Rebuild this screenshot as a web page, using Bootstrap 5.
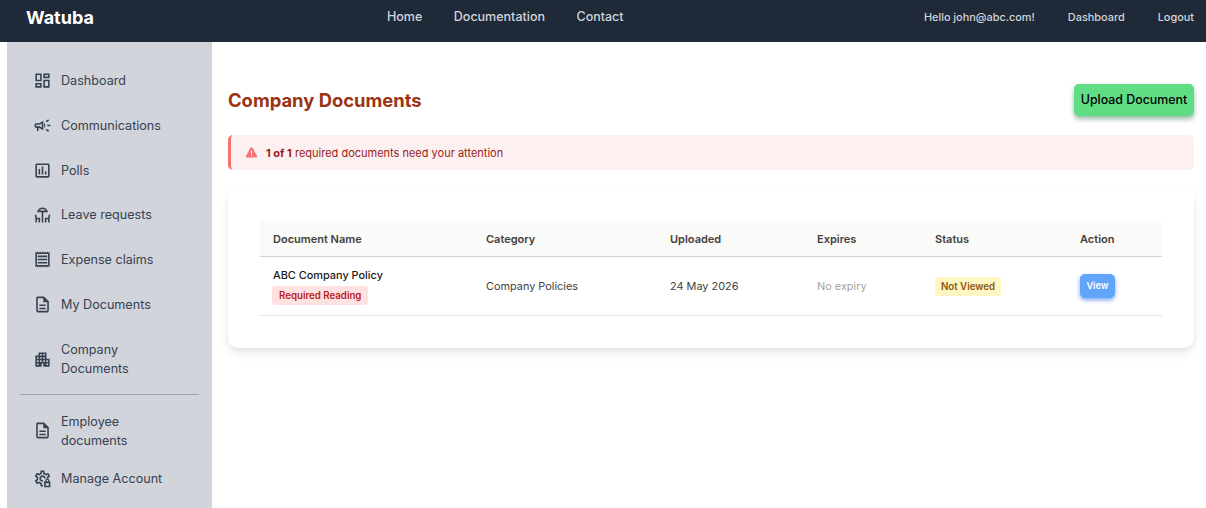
<!DOCTYPE html>
<html lang="en">
<head>
  <meta charset="UTF-8">
  <meta name="viewport" content="width=device-width, initial-scale=1.0">
  <title>Company Documents</title>
  <link href="https://cdn.jsdelivr.net/npm/bootstrap@5.3.0/dist/css/bootstrap.min.css" rel="stylesheet">
  <style>
    html, body { height: 100%; overflow: hidden; }
    body { font-family: Inter, "Liberation Sans", sans-serif; background: #fff; color: #374151; }
    .top-bar { height: 42px; background: #1f2937; padding: 0 12px 8px 26px; }
    .brand-name { width: 361px; font-size: 18px; font-weight: 700; color: #fff; text-decoration: none; }
    .top-mid { gap: 31.5px; }
    .top-mid a { font-size: 12.5px; font-weight: 500; color: #d1d5db; text-decoration: none; }
    .top-right { gap: 33px; }
    .top-right a, .top-right span { font-size: 10.9px; font-weight: 500; color: #d1d5db; text-decoration: none; }
    .page-wrap { height: 466px; padding-left: 7px; }
    .side-bar { width: 205px; background: #d1d5db; flex-shrink: 0; overflow: hidden; padding-top: 16.3px; }
    .side-link { display: flex; align-items: center; gap: 9px; padding: 12.85px 30px 12.85px 26px; font-size: 12.6px; line-height: 19px; color: #374151; text-decoration: none; }
    .side-link.two-line { padding-top: 13.85px; }
    .side-link.tight { padding-top: 9.5px; padding-bottom: 9.5px; }
    .side-link svg { width: 19px; height: 19px; flex-shrink: 0; fill: #374151; }
    .side-rule { margin: 3px 13px 7px; border-top: 1px solid #9ca3af; opacity: 1; }
    .main-pane { padding: 42px 12px 0 16px; }
    .page-title { font-size: 18.4px; font-weight: 700; color: #9a3412; margin: 0; padding-top: 1px; }
    .upload-btn { background: #60dc85; color: #000; font-size: 12.4px; font-weight: 500; border: 0; border-radius: 5px; height: 32px; width: 120px; padding: 0; box-shadow: 0 3px 5px rgba(22, 101, 52, .45); }
    .warn-box { height: 35px; margin-top: 19px; background: #fcf1f0; border-left: 3px solid #f87171; border-radius: 5px; padding: 1px 0 0 14px; gap: 8px; font-size: 11px; color: #991b1b; }
    .warn-box svg { width: 13px; height: 13px; margin-top: -2px; }
    .doc-panel { margin-top: 18px; height: 160px; background: #fff; border-radius: 10px; padding: 33px 32px 0; box-shadow: 0 6px 12px -2px rgba(0, 0, 0, .1), 0 2px 6px rgba(0, 0, 0, .04); }
    .doc-table { margin: 0; table-layout: fixed; width: 100%; font-size: 10.9px; }
    .doc-table th { background: #fafaf9; color: #44403c; font-size: 11px; font-weight: 600; height: 35px; padding: 1px 12px 0; vertical-align: middle; border-bottom: 1px solid #d6d3d1; }
    .doc-table td { height: 59px; padding: 1px 12px 0; vertical-align: middle; color: #44403c; border-bottom: 1px solid #e7e5e4; }
    .doc-table th:first-child, .doc-table td:first-child { padding-left: 13px; }
    .doc-name { color: #1c1917; font-weight: 450; line-height: 15px; }
    .req-tag { display: inline-block; background: #fee2e2; color: #b91c1c; font-size: 9.7px; font-weight: 600; line-height: 13px; padding: 3px 7px; border-radius: 3px; margin-top: 3px; margin-left: -1px; }
    .muted-cell { color: #a8a29e !important; }
    .status-tag { display: inline-block; background: #fef6c3; color: #8f5410; font-size: 9.7px; font-weight: 600; line-height: 13px; padding: 3px 6px; border-radius: 3px; }
    .view-btn { background: #60a5fa; color: #fff; font-size: 9.2px; font-weight: 600; border: 0; border-radius: 5px; height: 24px; width: 35px; padding: 0; box-shadow: 0 2px 4px rgba(37, 99, 235, .6); }
  </style>
</head>
<body>
  <nav class="top-bar d-flex align-items-center">
    <a href="#" class="brand-name">Watuba</a>
    <div class="top-mid d-flex align-items-center">
      <a href="#">Home</a>
      <a href="#">Documentation</a>
      <a href="#">Contact</a>
    </div>
    <div class="top-right d-flex align-items-center ms-auto">
      <span>Hello john@abc.com!</span>
      <a href="#">Dashboard</a>
      <a href="#">Logout</a>
    </div>
  </nav>

  <div class="page-wrap d-flex">
    <aside class="side-bar">
      <a href="#" class="side-link"><svg viewBox="0 0 24 24"><path d="M19 5v2h-4V5h4M9 5v6H5V5h4m10 8v6h-4v-6h4M9 17v2H5v-2h4M21 3h-8v6h8V3zM11 3H3v10h8V3zm10 8h-8v10h8V11zm-10 4H3v6h8v-6z"/></svg>Dashboard</a>
      <a href="#" class="side-link"><svg viewBox="0 0 24 24"><path d="M18 11v2h4v-2h-4zm-2 6.610c.96.710 2.210 1.650 3.200 2.390.4-.53.8-1.070 1.200-1.600-.99-.74-2.240-1.680-3.200-2.400-.4.54-.8 1.080-1.200 1.610zM20.400 5.600c-.4-.53-.8-1.070-1.200-1.600-.99.74-2.240 1.680-3.200 2.400.4.53.8 1.070 1.200 1.600.96-.72 2.210-1.650 3.200-2.400zM4 9c-1.100 0-2 .9-2 2v2c0 1.100.9 2 2 2h1v4h2v-4h1l5 3V6L8 9H4zm5.030 1.710L11 9.530v4.940l-1.970-1.180-.48-.29H4v-2h4.550l.48-.29zM15.500 12c0-1.330-.58-2.530-1.500-3.350v6.690c.92-.81 1.500-2.010 1.500-3.340z"/></svg>Communications</a>
      <a href="#" class="side-link"><svg viewBox="0 0 24 24"><path d="M19 3H5c-1.100 0-2 .9-2 2v14c0 1.100.9 2 2 2h14c1.100 0 2-.9 2-2V5c0-1.100-.9-2-2-2zm0 16H5V5h14v14zM7 10h2v7H7zm4-3h2v10h-2zm4 6h2v4h-2z"/></svg>Polls</a>
      <a href="#" class="side-link"><svg viewBox="0 0 24 24"><path fill-rule="evenodd" d="M19 9c-.8-3.500-3.500-6-7-6s-6.200 2.500-7 6h6v13h2V9zM12 5c2 0 3.600 1.300 4.300 2H7.700c.7-.7 2.300-2 4.300-2z"/><path d="M4.140 12l-1.960.37.820 4.370V22h2l.020-4H7v4h2v-6H4.900zM19.100 16H15v6h2v-4h1.980l.020 4h2v-5.260l.820-4.370-1.960-.37z"/></svg>Leave requests</a>
      <a href="#" class="side-link"><svg viewBox="0 0 24 24"><path d="M19.500 3.500L18 2l-1.500 1.500L15 2l-1.500 1.500L12 2l-1.500 1.500L9 2 7.500 3.500 6 2 4.500 3.500 3 2v20l1.500-1.500L6 22l1.500-1.500L9 22l1.500-1.500L12 22l1.500-1.500L15 22l1.500-1.500L18 22l1.500-1.500L21 22V2l-1.500 1.500zM19 19.090H5V4.910h14v14.180zM6 15h12v2H6zm0-4h12v2H6zm0-4h12v2H6z"/></svg>Expense claims</a>
      <a href="#" class="side-link"><svg viewBox="0 0 24 24"><path d="M8 16h8v2H8zm0-4h8v2H8zm6-10H6c-1.100 0-2 .9-2 2v16c0 1.100.89 2 1.990 2H18c1.100 0 2-.9 2-2V8l-6-6zm4 18H6V4h7v5h5v11z"/></svg>My Documents</a>
      <a href="#" class="side-link two-line"><svg viewBox="0 0 24 24"><path d="M17 11V3H7v4H3v14h8v-4h2v4h8V11h-4zM7 19H5v-2h2v2zm0-4H5v-2h2v2zm0-4H5V9h2v2zm4 4H9v-2h2v2zm0-4H9V9h2v2zm0-4H9V5h2v2zm4 8h-2v-2h2v2zm0-4h-2V9h2v2zm0-4h-2V5h2v2zm4 12h-2v-2h2v2zm0-4h-2v-2h2v2z"/></svg><span>Company Documents</span></a>
      <hr class="side-rule">
      <a href="#" class="side-link tight"><svg viewBox="0 0 24 24"><path d="M8 16h8v2H8zm0-4h8v2H8zm6-10H6c-1.100 0-2 .9-2 2v16c0 1.100.89 2 1.990 2H18c1.100 0 2-.9 2-2V8l-6-6zm4 18H6V4h7v5h5v11z"/></svg><span>Employee documents</span></a>
      <a href="#" class="side-link tight"><svg viewBox="0 0 24 24"><path d="M19.430 12.980c.04-.32.07-.64.07-.98 0-.34-.03-.66-.07-.98l2.110-1.650c.19-.15.24-.42.12-.64l-2-3.460c-.09-.16-.26-.25-.44-.25-.06 0-.12.01-.17.03l-2.490 1c-.52-.4-1.080-.73-1.690-.98l-.38-2.650C14.460 2.180 14.250 2 14 2h-4c-.25 0-.46.18-.49.42l-.38 2.650c-.61.25-1.170.59-1.690.98l-2.490-1c-.06-.02-.12-.03-.18-.03-.17 0-.34.09-.43.25l-2 3.460c-.13.22-.07.49.12.64l2.110 1.650c-.04.32-.07.65-.07.98 0 .33.03.66.07.98l-2.110 1.650c-.19.15-.24.42-.12.64l2 3.460c.09.16.26.25.44.25.06 0 .12-.01.17-.03l2.490-1c.52.4 1.080.73 1.690.98l.38 2.650c.03.24.24.42.49.42h4c.25 0 .46-.18.49-.42l.38-2.650c.61-.25 1.170-.59 1.690-.98l2.490 1c.06.02.12.03.18.03.17 0 .34-.09.43-.25l2-3.460c.12-.22.07-.49-.12-.64l-2.110-1.650zm-1.980-1.710c.04.31.05.52.05.73 0 .21-.02.43-.05.73l-.14 1.130.89.7 1.080.84-.7 1.210-1.270-.51-1.040-.42-.9.68c-.43.32-.84.56-1.250.73l-1.060.43-.16 1.130-.2 1.350h-1.400l-.19-1.350-.16-1.130-1.060-.43c-.43-.18-.83-.41-1.230-.71l-.91-.7-1.060.43-1.270.51-.7-1.210 1.080-.84.89-.7-.14-1.130c-.03-.31-.05-.54-.05-.74s.02-.43.05-.73l.14-1.130-.89-.7-1.080-.84.7-1.210 1.270.51 1.040.42.9-.68c.43-.32.84-.56 1.250-.73l1.060-.43.16-1.130.2-1.350h1.390l.19 1.350.16 1.130 1.060.43c.43.18.83.41 1.230.71l.91.7 1.060-.43 1.270-.51.7 1.210-1.070.85-.89.7.14 1.130zM12 8c-2.210 0-4 1.790-4 4s1.790 4 4 4 4-1.790 4-4-1.790-4-4-4zm0 6c-1.100 0-2-.9-2-2s.9-2 2-2 2 .9 2 2-.9 2-2 2z"/><path style="fill:#d1d5db" d="M12.500 12h11.500v12H12.500z"/><path fill-rule="evenodd" d="M14 15.500h1.500v-1a2.500 2.500 0 0 1 5 0v1H22V23h-8zM17 14.500v1h2v-1a1 1 0 0 0-2 0zM16 18v3h4v-3z"/></svg>Manage Account</a>
    </aside>

    <main class="main-pane flex-grow-1">
      <div class="d-flex align-items-center justify-content-between">
        <h1 class="page-title">Company Documents</h1>
        <button class="upload-btn" type="button">Upload Document</button>
      </div>
      <div class="warn-box d-flex align-items-center">
        <svg viewBox="0 0 16 16" fill="#f87171"><path fill-rule="evenodd" d="M8 1.500c.5 0 .9.300 1.200.800l5.600 10c.5.900-.1 2-1.200 2H2.400c-1.100 0-1.700-1.100-1.200-2l5.600-10c.3-.5.700-.8 1.200-.8zM7.300 5.500v4h1.400v-4zM7.300 10.700v1.400h1.400v-1.400z"/></svg>
        <span><strong>1 of 1</strong> required documents need your attention</span>
      </div>
      <div class="doc-panel">
        <table class="table doc-table">
          <colgroup>
            <col style="width: 214px"><col style="width: 184px"><col style="width: 147px"><col style="width: 118px"><col style="width: 145px"><col>
          </colgroup>
          <thead>
            <tr><th>Document Name</th><th>Category</th><th>Uploaded</th><th>Expires</th><th>Status</th><th>Action</th></tr>
          </thead>
          <tbody>
            <tr>
              <td><div class="doc-name">ABC Company Policy</div><span class="req-tag">Required Reading</span></td>
              <td>Company Policies</td>
              <td>24 May 2026</td>
              <td class="muted-cell">No expiry</td>
              <td><span class="status-tag">Not Viewed</span></td>
              <td><button class="view-btn" type="button">View</button></td>
            </tr>
          </tbody>
        </table>
      </div>
    </main>
  </div>
  <script src="https://cdn.jsdelivr.net/npm/bootstrap@5.3.0/dist/js/bootstrap.bundle.min.js"></script>
</body>
</html>
